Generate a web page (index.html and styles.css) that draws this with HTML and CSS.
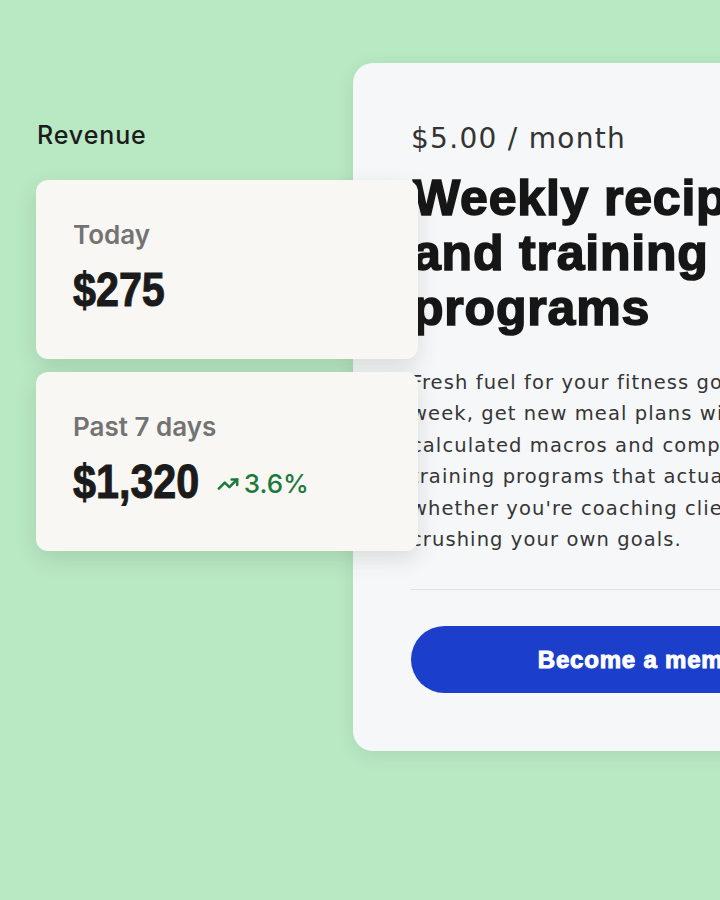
FILE: index.html
```html
<!DOCTYPE html>
<html lang="en">
<head>
<meta charset="utf-8">
<title>Revenue</title>
<link rel="stylesheet" href="styles.css">
</head>
<body>
<div class="stage">
  <section class="revenue">
    <h2 class="revenue-title">Revenue</h2>
    <div class="stat-card">
      <div class="stat-label">Today</div>
      <div class="stat-row">
        <span class="stat-value">$275</span>
      </div>
    </div>
    <div class="stat-card">
      <div class="stat-label">Past 7 days</div>
      <div class="stat-row">
        <span class="stat-value stat-value-wide">$1,320</span>
        <span class="trend">
          <svg class="trend-icon" viewBox="0 0 24 24" width="22" height="22" fill="none" stroke="currentColor" stroke-width="2.8" stroke-linecap="round" stroke-linejoin="round"><polyline points="22 7 13.5 15.5 8.5 10.5 2 17"/><polyline points="16 7 22 7 22 13"/></svg>
          <span class="trend-value">3.6%</span>
        </span>
      </div>
    </div>
  </section>
  <article class="plan-card">
    <div class="plan-price">$5.00 / month</div>
    <h1 class="plan-title">Weekly recipes<br>and training<br>programs</h1>
    <p class="plan-desc">Fresh fuel for your fitness goals. Every<br>week, get new meal plans with perfectly<br>calculated macros and complete<br>training programs that actually work,<br>whether you're coaching clients or<br>crushing your own goals.</p>
    <hr class="plan-divider">
    <button class="plan-button">Become a member</button>
  </article>
</div>
</body>
</html>
```

FILE: styles.css
```css
html, body {
  margin: 0;
  padding: 0;
}
body {
  width: 720px;
  height: 900px;
  overflow: hidden;
  background: #b9e9c3;
  font-family: "Inter", "Liberation Sans", sans-serif;
}
.stage {
  display: flex;
  align-items: flex-start;
  padding: 63px 0 0 36px;
}
.revenue {
  position: relative;
  z-index: 2;
  flex: 0 0 382px;
  width: 382px;
  padding-top: 58px;
  display: flex;
  flex-direction: column;
}
.revenue-title {
  margin: 0 0 30px 1px;
  font-size: 25px;
  line-height: 29px;
  font-weight: 500;
  letter-spacing: 0.9px;
  color: #1b1b1b;
}
.stat-card {
  box-sizing: border-box;
  height: 179px;
  margin-bottom: 13px;
  padding: 39px 36px 0 37px;
  background: #f8f7f3;
  border-radius: 12px;
  box-shadow: 0 8px 22px rgba(40, 60, 45, 0.14);
}
.stat-label {
  font-size: 26px;
  line-height: 32px;
  font-weight: 600;
  color: #737373;
}
.stat-row {
  display: flex;
  align-items: center;
  gap: 18px;
  margin-top: 11px;
  height: 56px;
}
.stat-value {
  display: inline-block;
  font-family: "Liberation Sans", sans-serif;
  font-size: 48px;
  line-height: 56px;
  font-weight: 700;
  letter-spacing: 0;
  color: #1b1b1b;
  -webkit-text-stroke: 1px #1b1b1b;
  transform: scaleX(0.86);
  transform-origin: left center;
}
.stat-value-wide {
  margin-right: -21px;
}
.trend {
  display: flex;
  align-items: center;
  gap: 5px;
  color: #1c7a3c;
  padding-top: 4px;
}
.trend-icon {
  display: block;
}
.trend-value {
  font-size: 26px;
  font-weight: 500;
  line-height: 32px;
}
.plan-card {
  position: relative;
  z-index: 1;
  flex: 0 0 595px;
  box-sizing: border-box;
  width: 595px;
  margin-left: -65px;
  padding: 59px 58px 58px 58px;
  background: #f6f7f9;
  border-radius: 20px;
  box-shadow: 0 4px 18px rgba(30, 60, 40, 0.10);
}
.plan-price {
  font-family: "DejaVu Sans", sans-serif;
  font-size: 28px;
  line-height: 34px;
  color: #333333;
  letter-spacing: 1.3px;
}
.plan-title {
  margin: 15px 0 0 2px;
  font-family: "Liberation Sans", sans-serif;
  font-size: 50px;
  line-height: 55px;
  font-weight: 700;
  letter-spacing: 0.8px;
  color: #161616;
  -webkit-text-stroke: 1.6px #161616;
  white-space: nowrap;
}
.plan-desc {
  margin: 31px 0 0 0;
  font-family: "DejaVu Sans", sans-serif;
  font-size: 19.5px;
  line-height: 31.4px;
  letter-spacing: 1.1px;
  color: #353535;
  white-space: nowrap;
}
.plan-divider {
  margin: 34px 0 0 0;
  border: 0;
  height: 1px;
  background: #e0e1e3;
}
.plan-button {
  display: block;
  margin-top: 36px;
  width: 479px;
  height: 67px;
  border: 0;
  border-radius: 34px;
  background: #1b3fcb;
  color: #ffffff;
  font-family: "Liberation Sans", sans-serif;
  font-size: 24px;
  font-weight: 700;
  letter-spacing: 0.8px;
  -webkit-text-stroke: 1px #ffffff;
}
```
